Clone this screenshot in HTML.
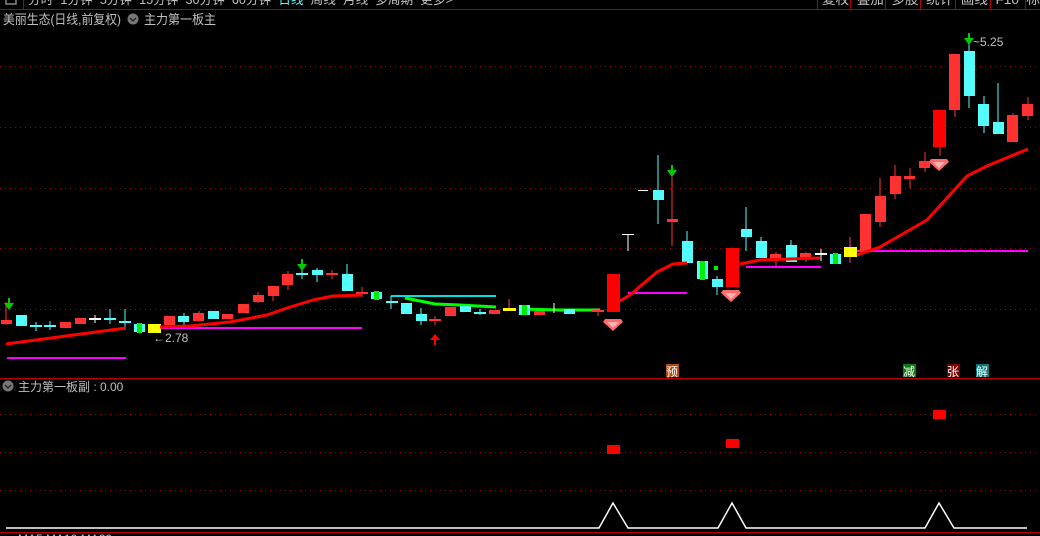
<!DOCTYPE html>
<html><head><meta charset="utf-8"><style>
html,body{margin:0;padding:0;background:#000;width:1040px;height:536px;overflow:hidden;font-family:"Liberation Sans","Noto Sans CJK SC",sans-serif}
</style></head><body>
<svg width="1040" height="536" xmlns="http://www.w3.org/2000/svg" style="position:absolute;left:0;top:0" font-family="Liberation Sans, Noto Sans CJK SC, sans-serif">
<rect width="1040" height="536" fill="#000"/>
<line x1="0" y1="9.5" x2="1040" y2="9.5" stroke="#b00000"/>
<line x1="23.5" y1="0" x2="23.5" y2="9" stroke="#b00000"/>
<rect x="6" y="-4" width="10" height="8" fill="none" stroke="#888" stroke-width="1.5"/>
<g font-size="13" fill="#c0c0c0">
<text x="28" y="4" textLength="425" lengthAdjust="spacingAndGlyphs">分时 &#160;1分钟 &#160;5分钟 &#160;15分钟 &#160;30分钟 &#160;60分钟 &#160;<tspan fill="#54fcfc">日线</tspan> &#160;周线 &#160;月线 &#160;多周期 &#160;更多&gt;</text>
<text x="822" y="4" textLength="218" lengthAdjust="spacingAndGlyphs">复权 &#160;叠加 &#160;多股 &#160;统计 &#160;画线 &#160;F10 &#160;标</text>
</g>
<g stroke="#b00000"><line x1="817.5" y1="0" x2="817.5" y2="9"/><line x1="850.5" y1="0" x2="850.5" y2="9"/><line x1="885.5" y1="0" x2="885.5" y2="9"/><line x1="920.5" y1="0" x2="920.5" y2="9"/><line x1="955.5" y1="0" x2="955.5" y2="9"/><line x1="990.5" y1="0" x2="990.5" y2="9"/><line x1="1025.5" y1="0" x2="1025.5" y2="9"/></g>
<text x="3" y="24" font-size="13" fill="#c0c0c0" textLength="118" lengthAdjust="spacingAndGlyphs">美丽生态(日线,前复权)</text>
<circle cx="133" cy="19" r="5.5" fill="#777"/><path d="M130 18 l3 3 l3 -3" stroke="#222" fill="none" stroke-width="1.3"/>
<text x="144" y="24" font-size="13" fill="#c0c0c0" textLength="72" lengthAdjust="spacingAndGlyphs">主力第一板主</text>
<g stroke="#a00000" stroke-dasharray="1 4">
<line x1="0" y1="66.5" x2="1040" y2="66.5"/><line x1="0" y1="127.5" x2="1040" y2="127.5"/><line x1="0" y1="188.5" x2="1040" y2="188.5"/><line x1="0" y1="248.5" x2="1040" y2="248.5"/><line x1="0" y1="309.5" x2="1040" y2="309.5"/>
<line x1="0" y1="414.5" x2="1040" y2="414.5"/><line x1="0" y1="452.5" x2="1040" y2="452.5"/><line x1="0" y1="490.5" x2="1040" y2="490.5"/>
</g>
<line x1="0" y1="378.5" x2="1040" y2="378.5" stroke="#c00000"/>
<line x1="0" y1="532.5" x2="1040" y2="532.5" stroke="#c00000"/>
<g stroke="#ff00ff" stroke-width="2">
<line x1="7" y1="358" x2="126" y2="358"/><line x1="160" y1="328" x2="362" y2="328"/><line x1="628" y1="293" x2="687" y2="293"/><line x1="746" y1="267" x2="821" y2="267"/><line x1="857" y1="251" x2="1028" y2="251"/>
</g>
<line x1="391" y1="296" x2="496" y2="296" stroke="#00e0e0" stroke-width="2"/>
<polyline points="405,298 420,301 435,304 460,305 496,307" stroke="#00ff00" stroke-width="3" fill="none"/>
<polyline points="520,309 560,310 600,310" stroke="#00ff00" stroke-width="3" fill="none"/>
<g>
<g stroke-width="1">
<line x1="6" y1="302" x2="6" y2="325" stroke="#ff3232"/>
<line x1="36" y1="322" x2="36" y2="331" stroke="#54fcfc"/><line x1="50" y1="321" x2="50" y2="330" stroke="#54fcfc"/>
<line x1="110" y1="309" x2="110" y2="324" stroke="#54fcfc"/><line x1="125" y1="309" x2="125" y2="330" stroke="#54fcfc"/>
<line x1="95" y1="315" x2="95" y2="323" stroke="#fff"/>
<line x1="302" y1="270" x2="302" y2="279" stroke="#54fcfc"/><line x1="317" y1="268" x2="317" y2="282" stroke="#54fcfc"/>
<line x1="332" y1="270" x2="332" y2="279" stroke="#ff3232"/><line x1="347" y1="264" x2="347" y2="291" stroke="#54fcfc"/>
<line x1="362" y1="287" x2="362" y2="297" stroke="#ff3232"/><line x1="391" y1="296" x2="391" y2="309" stroke="#54fcfc"/>
<line x1="421" y1="308" x2="421" y2="325" stroke="#54fcfc"/><line x1="435" y1="316" x2="435" y2="325" stroke="#ff3232"/>
<line x1="480" y1="309" x2="480" y2="315" stroke="#54fcfc"/><line x1="509" y1="299" x2="509" y2="311" stroke="#ff3399"/>
<line x1="554" y1="303" x2="554" y2="313" stroke="#fff"/><line x1="598" y1="308" x2="598" y2="316" stroke="#ff3232"/>
<line x1="628" y1="234" x2="628" y2="251" stroke="#fff"/><line x1="622" y1="234.5" x2="634" y2="234.5" stroke="#fff"/>
<line x1="638" y1="190.5" x2="648" y2="190.5" stroke="#fff"/>
<line x1="658" y1="155" x2="658" y2="224" stroke="#54fcfc"/><line x1="672" y1="175" x2="672" y2="246" stroke="#ff3232"/>
<line x1="687" y1="231" x2="687" y2="263" stroke="#54fcfc"/><line x1="717" y1="276" x2="717" y2="295" stroke="#54fcfc"/>
<line x1="746" y1="207" x2="746" y2="251" stroke="#54fcfc"/><line x1="761" y1="237" x2="761" y2="258" stroke="#54fcfc"/>
<line x1="776" y1="252" x2="776" y2="266" stroke="#ff3232"/><line x1="791" y1="240" x2="791" y2="262" stroke="#54fcfc"/>
<line x1="806" y1="252" x2="806" y2="262" stroke="#ff3232"/><line x1="821" y1="249" x2="821" y2="261" stroke="#fff"/>
<line x1="850" y1="237" x2="850" y2="263" stroke="#ff3399"/>
<line x1="880" y1="178" x2="880" y2="227" stroke="#ff3232"/><line x1="895" y1="165" x2="895" y2="199" stroke="#ff3232"/>
<line x1="910" y1="168" x2="910" y2="188" stroke="#ff3232"/><line x1="925" y1="152" x2="925" y2="172" stroke="#ff3232"/>
<line x1="940" y1="145" x2="940" y2="156" stroke="#ff3232"/><line x1="955" y1="108" x2="955" y2="117" stroke="#ff3232"/>
<line x1="969" y1="43" x2="969" y2="108" stroke="#54fcfc"/><line x1="984" y1="96" x2="984" y2="133" stroke="#54fcfc"/>
<line x1="998" y1="83" x2="998" y2="134" stroke="#54fcfc"/><line x1="1013" y1="113" x2="1013" y2="142" stroke="#ff3232"/>
<line x1="1028" y1="97" x2="1028" y2="120" stroke="#ff3232"/>
<line x1="184" y1="313" x2="184" y2="325" stroke="#54fcfc"/><line x1="199" y1="311" x2="199" y2="322" stroke="#ff3232"/>
<line x1="258" y1="292" x2="258" y2="303" stroke="#ff3232"/><line x1="273" y1="293" x2="273" y2="301" stroke="#ff3232"/>
<line x1="288" y1="271" x2="288" y2="290" stroke="#ff3232"/>
</g>
<g fill="#ff3232">
<rect x="1" y="320" width="11" height="4"/>
<rect x="60" y="322" width="11" height="6"/><rect x="75" y="318" width="11" height="6"/>
<rect x="164" y="316" width="11" height="9"/><rect x="193" y="313" width="11" height="8"/>
<rect x="222" y="314" width="11" height="5"/><rect x="238" y="304" width="11" height="9"/>
<rect x="253" y="295" width="11" height="7"/><rect x="268" y="286" width="11" height="10"/>
<rect x="282" y="274" width="11" height="11"/>
<rect x="445" y="307" width="11" height="9"/><rect x="489" y="310" width="11" height="4"/>
<rect x="534" y="311" width="11" height="4"/>
<rect x="667" y="219" width="11" height="3"/><rect x="770" y="254" width="11" height="4"/><rect x="800" y="253" width="11" height="5"/>
<rect x="860" y="214" width="11" height="37"/><rect x="875" y="196" width="11" height="26"/>
<rect x="890" y="176" width="11" height="18"/><rect x="904" y="176" width="11" height="3"/>
<rect x="919" y="161" width="11" height="7"/><rect x="949" y="54" width="11" height="56"/>
<rect x="1007" y="115" width="11" height="27"/><rect x="1022" y="104" width="11" height="12"/>
<rect x="326" y="273" width="12" height="2"/><rect x="356" y="292" width="12" height="2"/>
<rect x="429" y="319" width="12" height="2"/><rect x="592" y="310" width="12" height="2"/>
</g>
<g fill="#ff0000"><rect x="607" y="274" width="13" height="38"/><rect x="726" y="248" width="13" height="39"/><rect x="933" y="110" width="13" height="37"/></g>
<g fill="#54fcfc">
<rect x="16" y="315" width="11" height="11"/>
<rect x="30" y="325" width="12" height="2"/><rect x="44" y="325" width="12" height="2"/>
<rect x="104" y="318" width="12" height="2"/><rect x="119" y="321" width="12" height="2"/>
<rect x="134" y="324" width="11" height="8"/><rect x="178" y="316" width="11" height="6"/>
<rect x="208" y="311" width="11" height="8"/>
<rect x="296" y="273" width="12" height="2"/><rect x="312" y="270" width="11" height="5"/>
<rect x="342" y="274" width="11" height="17"/><rect x="371" y="292" width="11" height="7"/>
<rect x="386" y="301" width="12" height="2"/><rect x="401" y="303" width="11" height="11"/>
<rect x="416" y="314" width="11" height="7"/><rect x="460" y="306" width="11" height="6"/>
<rect x="474" y="312" width="12" height="2"/><rect x="519" y="305" width="11" height="10"/>
<rect x="564" y="309" width="11" height="5"/>
<rect x="653" y="190" width="11" height="10"/><rect x="682" y="241" width="11" height="22"/>
<rect x="697" y="261" width="11" height="18"/><rect x="712" y="279" width="11" height="8"/>
<rect x="741" y="229" width="11" height="8"/><rect x="756" y="241" width="11" height="17"/>
<rect x="786" y="245" width="11" height="17"/><rect x="830" y="254" width="11" height="10"/>
<rect x="964" y="51" width="11" height="45"/><rect x="978" y="104" width="11" height="22"/>
<rect x="993" y="122" width="11" height="12"/>
</g>
<g fill="#00ee00"><rect x="137" y="323" width="5" height="10"/><rect x="374" y="291" width="5" height="9"/><rect x="522" y="305" width="5" height="10"/><rect x="700" y="261" width="5" height="19"/><rect x="714" y="266" width="4" height="4"/><rect x="833" y="253" width="5" height="11"/></g>
<rect x="89" y="318" width="12" height="2" fill="#fff"/><rect x="815" y="253" width="12" height="2" fill="#fff"/>
<g fill="#ffff00"><rect x="148" y="324" width="13" height="9"/><rect x="503" y="308" width="13" height="3"/><rect x="844" y="247" width="13" height="10"/></g>
</g>
<g stroke="#ff0000" stroke-width="3" fill="none" stroke-linejoin="round">
<polyline points="6,344 126,328"/>
<polyline points="160,327 190,326 230,322 267,315 287,308 313,300 333,296 362,295"/>
<polyline points="613,305 630,295 657,272 673,264 687,263"/>
<polyline points="740,264 760,260 820,258"/>
<polyline points="857,255 880,247 927,220 947,198 967,176 987,166 1028,149"/>
</g>
<g fill="#00cc00"><rect x="8" y="298" width="2" height="6"/><path d="M4 303 h10 l-5 7z"/>
<rect x="301" y="259" width="2" height="6"/><path d="M297 264 h10 l-5 7z"/>
<rect x="671" y="165" width="2" height="6"/><path d="M667 170 h10 l-5 7z"/>
<rect x="968" y="33" width="2" height="6"/><path d="M964 38 h10 l-5 7z"/></g>
<g fill="#ff0000"><path d="M430 340 l5 -6 l5 6z"/><rect x="434" y="339" width="2" height="6"/></g>
<g><path d="M605 319 h16 l2 3 l-10 9 l-10 -9z" fill="#ff6a6a"/><path d="M607 322 h12 l-6 6z" fill="#ffb0b0"/>
<path d="M723 290 h16 l2 3 l-10 9 l-10 -9z" fill="#ff6a6a"/><path d="M725 293 h12 l-6 6z" fill="#ffb0b0"/>
<path d="M931 159 h16 l2 3 l-10 9 l-10 -9z" fill="#ff6a6a"/><path d="M933 162 h12 l-6 6z" fill="#ffb0b0"/></g>
<text x="153" y="342" font-size="12" fill="#c0c0c0">←2.78</text>
<text x="973" y="46" font-size="12" fill="#c0c0c0">~5.25</text>
<g font-size="12" fill="#fff">
<rect x="666" y="364" width="13" height="13" fill="#b04a10"/><text x="666" y="376">预</text>
<rect x="903" y="364" width="13" height="13" fill="#107a10"/><text x="903" y="376">减</text>
<rect x="947" y="364" width="13" height="13" fill="#7a0000"/><text x="947" y="376">张</text>
<rect x="976" y="364" width="13" height="13" fill="#107878"/><text x="976" y="376">解</text>
</g>
<circle cx="8" cy="386" r="5.5" fill="#777"/><path d="M5 385 l3 3 l3 -3" stroke="#222" fill="none" stroke-width="1.3"/>
<text x="18" y="391" font-size="12" fill="#c0c0c0">主力第一板副 : 0.00</text>
<g fill="#ff0000"><rect x="607" y="445" width="13" height="9"/><rect x="726" y="439" width="13" height="9"/><rect x="933" y="410" width="13" height="9"/></g>
<polyline points="6,528 599,528 613,503 628,528 718,528 732,503 746,528 925,528 939,503 954,528 1027,528" stroke="#fff" stroke-width="1.5" fill="none"/>
<text x="18" y="543" font-size="12" fill="#c0c0c0">MA5 MA10 MA20 ...</text>
</svg>
</body></html>
